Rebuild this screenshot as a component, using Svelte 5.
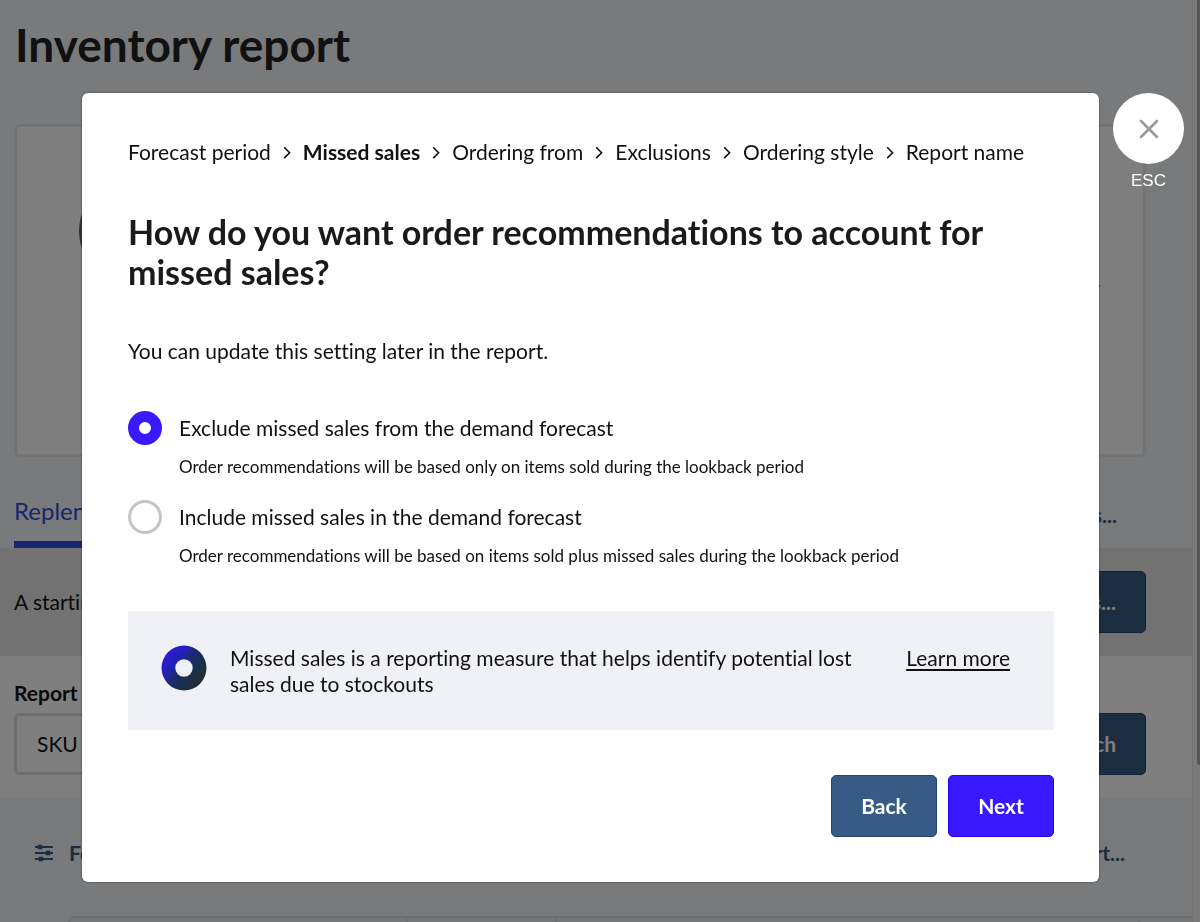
<script>
  const steps = [
    'Forecast period',
    'Missed sales',
    'Ordering from',
    'Exclusions',
    'Ordering style',
    'Report name',
  ];
  const current = 1;

  const options = [
    {
      id: 'exclude',
      label: 'Exclude missed sales from the demand forecast',
      hint: 'Order recommendations will be based only on items sold during the lookback period',
    },
    {
      id: 'include',
      label: 'Include missed sales in the demand forecast',
      hint: 'Order recommendations will be based on items sold plus missed sales during the lookback period',
    },
  ];

  let selected = $state('exclude');
</script>

<div class="shell">
  <main class="page">
    <h1>Inventory report</h1>

    <section class="card">
      <svg class="ring" viewBox="0 0 100 100" aria-hidden="true">
        <circle cx="50" cy="50" r="48" fill="none" stroke="#666" stroke-width="4" />
      </svg>
      <span class="summary">Inventory</span>
    </section>

    <nav class="tabs">
      <a class="tab" href="#replenishment">Replenishment</a>
      <button class="plain" type="button">Settings...</button>
    </nav>

    <section class="band muted">
      <span>A starting point</span>
      <button class="btn navy" type="button">Settings...</button>
    </section>

    <section class="band search">
      <div class="field">
        <label for="report">Report</label>
        <select id="report">
          <option>SKU</option>
        </select>
      </div>
      <button class="btn navy" type="button">Search</button>
    </section>

    <section class="tools">
      <button class="plain filter" type="button">
        <svg viewBox="0 0 20 18" aria-hidden="true">
          <path d="M1 3h18M1 9h18M1 15h18" stroke="currentColor" stroke-width="2" />
          <path d="M4 1h4v4h-4zM12 7h4v4h-4zM5 13h4v4h-4z" fill="currentColor" stroke="currentColor" stroke-width="0.6" />
        </svg>
        Forecast
      </button>
      <button class="plain" type="button">Export...</button>
    </section>

    <div class="grid"><i></i><i></i><i></i><i></i></div>
  </main>
  <div class="rail"><div class="thumb"></div></div>
</div>

<div class="overlay">
  <div class="dialog" role="dialog" aria-modal="true" aria-labelledby="question">
    <ol class="steps">
      {#each steps as step, i}
        <li class:current={i === current} aria-current={i === current ? 'step' : undefined}>
          {step}
        </li>
        {#if i < steps.length - 1}
          <li class="sep" aria-hidden="true">
            <svg viewBox="0 0 8 14"><path d="M1.2 2.3l5.4 5.4-5.4 5.4" fill="none" stroke="#111" stroke-width="1.6" /></svg>
          </li>
        {/if}
      {/each}
    </ol>

    <h2 id="question">How do you want order recommendations to account for missed sales?</h2>
    <p class="note">You can update this setting later in the report.</p>

    <div class="options" role="radiogroup" aria-labelledby="question">
      {#each options as option}
        <div class="option">
          <input
            type="radio"
            name="missed"
            id={option.id}
            value={option.id}
            bind:group={selected}
            aria-describedby="{option.id}-hint"
          />
          <label for={option.id}>{option.label}</label>
          <p id="{option.id}-hint">{option.hint}</p>
        </div>
      {/each}
    </div>

    <aside class="info">
      <svg class="donut" viewBox="0 0 46 46" aria-hidden="true">
        <defs>
          <linearGradient id="donut-fill" x1="0.05" y1="0.2" x2="0.85" y2="0.85">
            <stop offset="0" stop-color="#2f1be0" />
            <stop offset="0.3" stop-color="#2420b4" />
            <stop offset="0.5" stop-color="#1b2c6a" />
            <stop offset="0.75" stop-color="#193049" />
            <stop offset="1" stop-color="#262c30" />
          </linearGradient>
        </defs>
        <path
          fill="url(#donut-fill)"
          fill-rule="evenodd"
          d="M23 0.5a22.5 22.5 0 1 0 0 45a22.5 22.5 0 1 0 0-45zM23 14.3a8.7 8.7 0 1 1 0 17.4a8.7 8.7 0 1 1 0-17.4z"
        />
      </svg>
      <p>Missed sales is a reporting measure that helps identify potential lost sales due to stockouts</p>
      <a href="#missed-sales">Learn more</a>
    </aside>

    <div class="actions">
      <button class="btn back" type="button">Back</button>
      <button class="btn next" type="button">Next</button>
    </div>
  </div>

  <div class="dismiss">
    <button type="button" aria-label="Close">
      <svg viewBox="0 0 20 20" aria-hidden="true">
        <path d="M2 2l16 16M18 2L2 18" stroke="#999" stroke-width="2.6" stroke-linecap="round" />
      </svg>
    </button>
    <span>ESC</span>
  </div>
</div>

<style>
  :global(body) {
    margin: 0;
    overflow: hidden;
    font-family: Lato, 'Liberation Sans', sans-serif;
    font-size: 21px;
    line-height: 28px;
    font-variant-ligatures: none;
    color: #111;
  }

  h1,
  h2,
  p,
  ol {
    margin: 0;
    padding: 0;
  }

  button,
  select {
    font: inherit;
    cursor: pointer;
  }

  .shell {
    display: flex;
    height: 100vh;
    overflow: hidden;
    background: #f2f4f6;
  }

  .page {
    flex: 1;
    min-width: 0;
    border-right: 1px solid #e2e4e6;
  }

  .rail {
    width: 7px;
    display: flex;
    justify-content: flex-end;
    background: #f3f3f3;
  }

  .thumb {
    width: 3px;
    height: 83%;
    border-radius: 0 0 0 3px;
    background: #aaa;
  }

  h1 {
    padding: 18px 15px 0;
    font-size: 46px;
    line-height: 54px;
    font-weight: 700;
    color: #222;
  }

  .card {
    box-sizing: border-box;
    display: flex;
    justify-content: space-between;
    height: 333px;
    margin: 52px 46px 0 14px;
    padding: 54px 43px 0 62px;
    border: 3px solid #e4e6e9;
    border-radius: 6px;
    background: #fff;
  }

  .ring {
    width: 100px;
    height: 100px;
  }

  .summary {
    margin-top: 93px;
  }

  .tabs {
    display: flex;
    justify-content: space-between;
    margin-top: 32px;
    padding: 0 75px 0 14px;
  }

  .tab {
    padding: 7px 0 16px;
    border-bottom: 7px solid #2a4fdc;
    color: #2a4fdc;
    font-size: 24px;
    line-height: 29px;
    text-decoration: none;
  }

  .plain {
    padding: 0;
    border: 0;
    background: none;
    color: #385b85;
    font-weight: 700;
  }

  .tabs .plain {
    padding-bottom: 8px;
  }

  .band {
    display: flex;
    align-items: center;
    justify-content: space-between;
    box-sizing: border-box;
    padding: 0 46px 0 14px;
  }

  .muted {
    height: 108px;
    background: #e4e5e7;
  }

  .search {
    align-items: flex-end;
    height: 142px;
    padding-bottom: 23px;
    background: #fff;
  }

  .field {
    display: flex;
    flex-direction: column;
    gap: 6px;
  }

  .field label {
    font-weight: 700;
  }

  .field select {
    appearance: none;
    width: 300px;
    height: 62px;
    padding: 0 20px;
    border: 3px solid #dadcdf;
    border-radius: 5px;
    background: #fff;
    color: #111;
  }

  .tools {
    display: flex;
    align-items: center;
    justify-content: space-between;
    height: 109px;
    padding: 0 67px 0 34px;
  }

  .filter {
    display: flex;
    align-items: center;
    gap: 15px;
  }

  .filter svg {
    width: 20px;
    height: 18px;
  }

  .grid {
    display: grid;
    grid-template-columns: 336fr 149fr 582fr 54fr;
    height: 60px;
    margin: 9px 0 0 68px;
    border: 2px solid #dcdee0;
    border-right: 0;
    border-radius: 6px 0 0 0;
    background: #e8eaec;
  }

  .grid i + i {
    border-left: 2px solid #dcdee0;
  }

  .btn {
    height: 62px;
    padding: 0 29px;
    border: 1px solid;
    border-radius: 5px;
    color: #fff;
    font-weight: 700;
  }

  .back,
  .navy {
    background: #385b85;
    border-color: #234478;
  }

  .next {
    background: #3a19ff;
    border-color: #2200ff;
  }

  .overlay {
    position: fixed;
    inset: 0;
    display: flex;
    align-items: flex-start;
    gap: 14px;
    padding: 93px 16px 0 82px;
    background: rgba(0, 0, 0, 0.5);
  }

  .dialog {
    flex: 1;
    min-width: 0;
    padding: 45px 45px 45px 46px;
    border-radius: 6px;
    background: #fff;
    box-shadow: 0 0 2px rgba(0, 0, 0, 0.6);
  }

  .steps {
    display: flex;
    flex-wrap: wrap;
    gap: 12px;
    list-style: none;
  }

  .current {
    font-weight: 700;
  }

  .sep {
    display: flex;
    align-items: center;
  }

  .sep svg {
    width: 8px;
    height: 14px;
  }

  h2 {
    margin-top: 46px;
    font-size: 34px;
    line-height: 40px;
    font-weight: 700;
    color: #1a1a1a;
  }

  .note {
    margin-top: 45px;
  }

  .options {
    display: grid;
    gap: 21px;
    margin-top: 46px;
  }

  .option {
    display: grid;
    grid-template-columns: 34px 1fr;
    align-items: center;
    gap: 10px 17px;
  }

  .option input {
    appearance: none;
    box-sizing: border-box;
    width: 34px;
    height: 34px;
    margin: 0;
    border: 3px solid #c4c4c4;
    border-radius: 50%;
    background: #fff;
  }

  .option input:checked {
    border: 11px solid #3a19ff;
  }

  .option p {
    grid-column: 2;
    font-size: 17px;
    line-height: 24px;
  }

  .info {
    display: flex;
    align-items: flex-start;
    margin-top: 43px;
    padding: 34px 44px 33px 33px;
    background: #f0f1f7;
    line-height: 26px;
  }

  .donut {
    flex: none;
    width: 46px;
    height: 46px;
    margin-right: 23px;
  }

  .info p {
    flex: 1;
    margin-right: 45px;
  }

  .info a {
    color: inherit;
    text-underline-offset: 3px;
  }

  .actions {
    display: flex;
    justify-content: flex-end;
    gap: 11px;
    margin-top: 45px;
  }

  .actions .btn {
    width: 106px;
  }

  .dismiss {
    display: flex;
    flex-direction: column;
    align-items: center;
    gap: 5px;
    color: #fff;
    font-family: 'Liberation Sans', Arial, sans-serif;
    font-size: 17px;
    line-height: 24px;
  }

  .dismiss button {
    display: grid;
    place-items: center;
    width: 71px;
    height: 71px;
    padding: 0;
    border: 0;
    border-radius: 50%;
    background: #fff;
  }

  .dismiss svg {
    width: 20px;
    height: 20px;
  }
</style>
